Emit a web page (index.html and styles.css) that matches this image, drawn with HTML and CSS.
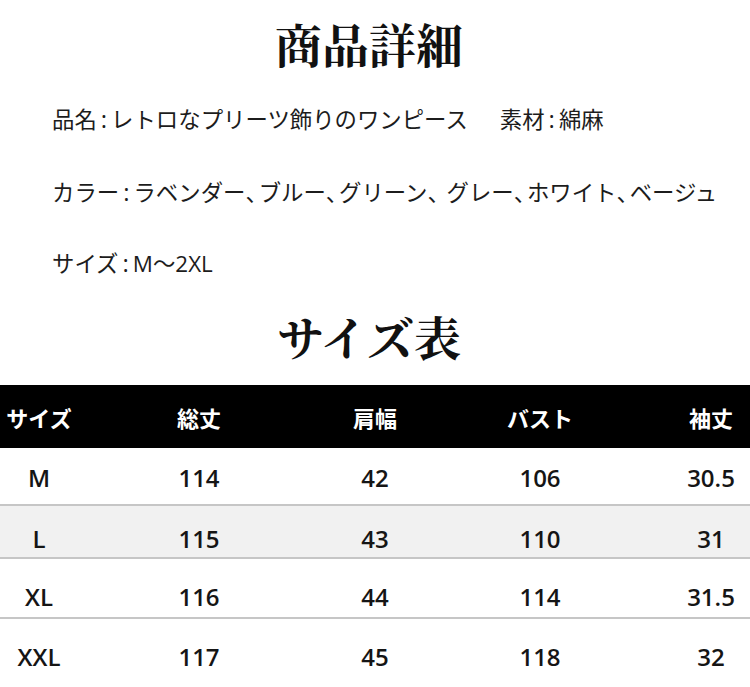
FILE: index.html
```html
<!DOCTYPE html>
<html lang="ja">
<head>
<meta charset="utf-8">
<link rel="stylesheet" href="styles.css">
</head>
<body>
<div class="page">
  <h1 class="title">商品詳細</h1>
  <div class="info">
    <p class="line"><span>品名<span class="k">:</span>レトロなプリーツ飾りのワンピース</span><span>素材<span class="k">:</span>綿麻</span></p>
    <p class="line"><span>カラー<span class="k">:</span>ラベンダー<span class="p">、</span>ブルー<span class="p">、</span>グリーン<span class="p">、</span> グレー<span class="p">、</span>ホワイト<span class="p">、</span>ベージュ</span></p>
    <p class="line"><span>サイズ<span class="k">:</span>M～2XL</span></p>
  </div>
  <h2 class="title sub">サイズ表</h2>
  <div class="table">
    <div class="row head">
      <div class="c">サイズ</div><div class="c">総丈</div><div class="c">肩幅</div><div class="c c4">バスト</div><div class="c">袖丈</div>
    </div>
    <div class="row r1">
      <div class="c">M</div><div class="c">114</div><div class="c">42</div><div class="c c4">106</div><div class="c">30.5</div>
    </div>
    <div class="row r2 alt">
      <div class="c">L</div><div class="c">115</div><div class="c">43</div><div class="c c4">110</div><div class="c">31</div>
    </div>
    <div class="row r3">
      <div class="c">XL</div><div class="c">116</div><div class="c">44</div><div class="c c4">114</div><div class="c">31.5</div>
    </div>
    <div class="row r4">
      <div class="c">XXL</div><div class="c">117</div><div class="c">45</div><div class="c c4">118</div><div class="c">32</div>
    </div>
  </div>
</div>
</body>
</html>
```
FILE: styles.css
```css
html, body {
  margin: 0;
  padding: 0;
  background: #fff;
}
.page {
  width: 750px;
  overflow: hidden;
}
.title {
  margin: 0;
  height: 83px;
  line-height: 86px;
  padding-right: 12px;
  text-align: center;
  font-family: "Noto Serif CJK JP", "Noto Serif JP", "IPAexMincho", "Noto Sans CJK JP", serif;
  font-weight: 700;
  font-size: 47px;
  color: #111;
}
.title.sub {
  height: 86px;
  line-height: 74px;
}
.info {
  padding-left: 52px;
  font-family: "Open Sans", "Noto Sans CJK JP", sans-serif;
  font-size: 22.4px;
  color: #1c1c1c;
}
.line {
  margin: 0;
  height: 72px;
  line-height: 72px;
  display: flex;
  gap: 32px;
  white-space: nowrap;
}
.k {
  padding: 0 4px;
  font-size: 24px;
}
.p {
  font-family: "Noto Sans CJK JP", sans-serif;
  font-feature-settings: "halt";
  padding-right: 2px;
}
.table {
  font-family: "Open Sans", "Noto Sans CJK JP", sans-serif;
  font-weight: 600;
  font-size: 24px;
  color: #151515;
}
.row {
  display: grid;
  grid-template-columns: 78px 242px 110px 242px 78px;
  align-items: center;
  text-align: center;
  box-sizing: border-box;
}
.c4 {
  padding-right: 22px;
}
.head {
  height: 63px;
  background: #000;
  color: #fff;
  font-family: "Noto Sans CJK JP", sans-serif;
  font-weight: 700;
  font-size: 22px;
}
.r1 { height: 56px; padding-top: 2px; }
.r2 { height: 53px; padding-top: 14px; border-top: 2px solid #c6c6c6; }
.r3 { height: 60px; padding-top: 16px; border-top: 2px solid #c6c6c6; }
.r4 { height: 70px; padding-top: 6px; border-top: 2px solid #c6c6c6; }
.alt { background: #f1f1f1; }
```
